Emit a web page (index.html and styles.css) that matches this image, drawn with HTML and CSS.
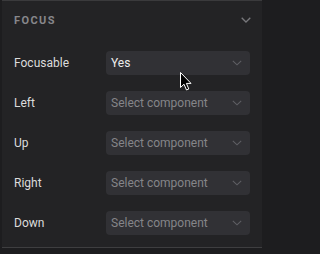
FILE: index.html
```html
<!DOCTYPE html>
<html>
<head>
<meta charset="utf-8">
<link rel="stylesheet" href="styles.css">
</head>
<body>
<section class="panel">
  <header class="panel-head">
    <span class="panel-title">FOCUS</span>
    <svg class="chev-lg" width="10" height="6" viewBox="0 0 10 6"><path d="M0.7 0.7 L5 5 L9.3 0.7" fill="none" stroke="#77777b" stroke-width="1.3"/></svg>
  </header>
  <div class="rows">
    <div class="row">
      <span class="label">Focusable</span>
      <div class="select"><span class="value">Yes</span><svg class="chev" width="10" height="6" viewBox="0 0 10 6"><path d="M0.8 0.8 L5 4.8 L9.2 0.8" fill="none" stroke="#5f5f64" stroke-width="1.1"/></svg></div>
    </div>
    <div class="row">
      <span class="label">Left</span>
      <div class="select"><span class="placeholder">Select component</span><svg class="chev" width="10" height="6" viewBox="0 0 10 6"><path d="M0.8 0.8 L5 4.8 L9.2 0.8" fill="none" stroke="#5f5f64" stroke-width="1.1"/></svg></div>
    </div>
    <div class="row">
      <span class="label">Up</span>
      <div class="select"><span class="placeholder">Select component</span><svg class="chev" width="10" height="6" viewBox="0 0 10 6"><path d="M0.8 0.8 L5 4.8 L9.2 0.8" fill="none" stroke="#5f5f64" stroke-width="1.1"/></svg></div>
    </div>
    <div class="row">
      <span class="label">Right</span>
      <div class="select"><span class="placeholder">Select component</span><svg class="chev" width="10" height="6" viewBox="0 0 10 6"><path d="M0.8 0.8 L5 4.8 L9.2 0.8" fill="none" stroke="#5f5f64" stroke-width="1.1"/></svg></div>
    </div>
    <div class="row">
      <span class="label">Down</span>
      <div class="select"><span class="placeholder">Select component</span><svg class="chev" width="10" height="6" viewBox="0 0 10 6"><path d="M0.8 0.8 L5 4.8 L9.2 0.8" fill="none" stroke="#5f5f64" stroke-width="1.1"/></svg></div>
    </div>
  </div>
</section>
<svg class="cursor" width="13" height="20" viewBox="0 0 13 20"><path d="M0.5 0.5 L0.5 15.5 L4 12.2 L6.5 18 L8.8 17 L6.4 11.4 L11 11.4 Z" fill="#000" stroke="#fff" stroke-width="1" stroke-linejoin="miter"/></svg>
</body>
</html>
```
FILE: styles.css
```css
html, body {
  margin: 0;
  padding: 0;
  background: #1d1d1f;
  width: 264px;
  height: 254px;
  overflow: hidden;
  position: relative;
  font-family: Roboto, "Liberation Sans", sans-serif;
}
.panel {
  margin: 0 2px;
  background: #232325;
  border-top: 1px solid #3a3a3c;
  border-bottom: 1px solid #3e3e40;
  padding: 0 12px 12px;
}
.panel-head {
  height: 38px;
  display: flex;
  align-items: center;
  justify-content: space-between;
}
.panel-title {
  font-size: 11px;
  font-weight: 700;
  letter-spacing: 1.4px;
  color: #87878b;
}
.chev-lg {
  margin-right: -1px;
  display: block;
}
.rows {
  padding-top: 12px;
  display: flex;
  flex-direction: column;
  gap: 16px;
}
.row {
  display: flex;
  align-items: center;
  height: 24px;
}
.label {
  width: 92px;
  font-size: 12px;
  color: #dcdcdc;
}
.select {
  flex: 1;
  height: 24px;
  background: #313135;
  border-radius: 4px;
  display: flex;
  align-items: center;
  justify-content: space-between;
  padding: 0 8px 0 5px;
  box-sizing: border-box;
  font-size: 12px;
}
.value {
  color: #ececec;
}
.placeholder {
  color: #858589;
}
.chev {
  display: block;
}
.cursor {
  position: absolute;
  left: 180px;
  top: 72px;
}
```
